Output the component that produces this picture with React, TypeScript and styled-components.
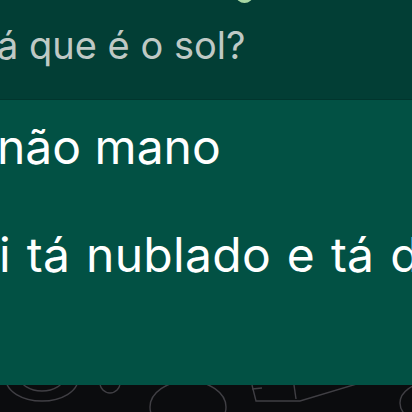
import React from 'react';
import styled, { createGlobalStyle } from 'styled-components';

const GlobalStyle = createGlobalStyle`
  html, body {
    margin: 0;
    padding: 0;
    background: #0b0c0e;
  }
  #root {
    width: 412px;
    height: 412px;
  }
`;

const Screen = styled.div`
  width: 412px;
  height: 412px;
  overflow: hidden;
  display: flex;
  flex-direction: column;
  background: #0b0c0e;
  font-family: Inter, 'Liberation Sans', sans-serif;
`;

const Bubble = styled.div`
  display: flex;
  flex-direction: column;
  height: 385px;
  background: #025144;
  flex-shrink: 0;
`;

const Quote = styled.div`
  position: relative;
  height: 99px;
  background: #023e35;
  border-bottom: 1px solid #01352d;
  overflow: hidden;
`;

const QuoteText = styled.div`
  margin-top: 22px;
  margin-left: -3px;
  font-size: 38px;
  line-height: 46px;
  color: #bfc9c5;
  white-space: nowrap;
`;

const SenderDot = styled.span`
  position: absolute;
  left: 236px;
  top: -12px;
  width: 17px;
  height: 15px;
  border-radius: 50%;
  background: #a8d8a4;
`;

const Body = styled.div`
  padding-top: 20px;
  font-size: 48px;
  line-height: 54px;
  color: #ffffff;
  white-space: nowrap;
  overflow: hidden;
`;

const Line = styled.div<{ $spread?: boolean }>`
  height: 54px;
  margin-left: ${({ $spread }) => ($spread ? '-1px' : '-3px')};
  word-spacing: ${({ $spread }) => ($spread ? '2px' : '0')};
  letter-spacing: ${({ $spread }) => ($spread ? '0.3px' : '0')};
`;

const Wallpaper = styled.div`
  flex: 1;
  overflow: hidden;
`;

const Doodles = () => (
  <svg width="412" height="27" viewBox="0 0 412 27" fill="none" stroke="#403f44" strokeWidth="1.4">
    <ellipse cx="42" cy="-6" rx="36" ry="22" />
    <ellipse cx="42" cy="-8" rx="22" ry="14" />
    <ellipse cx="110" cy="-2" rx="10" ry="10" />
    <ellipse cx="188" cy="22" rx="38" ry="26" />
    <path d="M252 0 L256 16 L300 16 L360 -2" />
    <path d="M252 4 L262 3" />
    <path d="M294 0 L296 14" />
    <ellipse cx="428" cy="18" rx="28" ry="20" />
  </svg>
);

const App: React.FC = () => {
  return (
    <Screen>
      <GlobalStyle />
      <Bubble>
        <Quote>
          <SenderDot />
          <QuoteText>á que é o sol?</QuoteText>
        </Quote>
        <Body>
          <Line>não mano</Line>
          <Line />
          <Line $spread>i tá nublado e tá de boa</Line>
        </Body>
      </Bubble>
      <Wallpaper>
        <Doodles />
      </Wallpaper>
    </Screen>
  );
};

export default App;
